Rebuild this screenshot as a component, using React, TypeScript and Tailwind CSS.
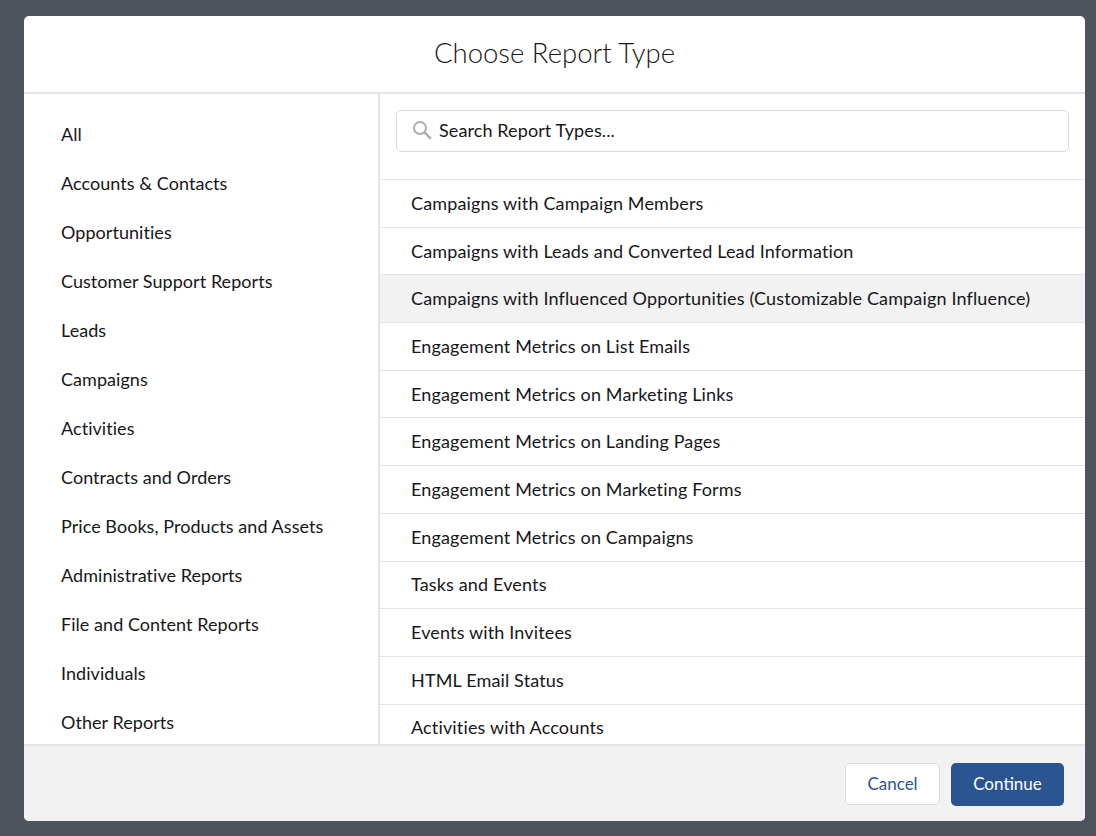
import React from 'react';

const categories = [
  'All',
  'Accounts & Contacts',
  'Opportunities',
  'Customer Support Reports',
  'Leads',
  'Campaigns',
  'Activities',
  'Contracts and Orders',
  'Price Books, Products and Assets',
  'Administrative Reports',
  'File and Content Reports',
  'Individuals',
  'Other Reports',
];

const reportTypes = [
  'Campaigns with Campaign Members',
  'Campaigns with Leads and Converted Lead Information',
  'Campaigns with Influenced Opportunities (Customizable Campaign Influence)',
  'Engagement Metrics on List Emails',
  'Engagement Metrics on Marketing Links',
  'Engagement Metrics on Landing Pages',
  'Engagement Metrics on Marketing Forms',
  'Engagement Metrics on Campaigns',
  'Tasks and Events',
  'Events with Invitees',
  'HTML Email Status',
  'Activities with Accounts',
];

const App = () => {
  return (
    <div className="h-[836px] overflow-hidden bg-[#4f535e] pl-[24px] pr-[11px] pt-[16px] font-['Lato',sans-serif] text-[#16171a]">
      <div className="flex h-[805px] flex-col overflow-hidden rounded-[5px] bg-white">
        {/* Header */}
        <div className="flex h-[78px] shrink-0 items-center justify-center border-b-2 border-[#e4e4e4] pb-[2px]">
          <h2 className="text-[27.5px] font-light text-[#16171a]">Choose Report Type</h2>
        </div>

        {/* Body */}
        <div className="flex min-h-0 flex-1">
          <nav className="w-[354px] shrink-0 overflow-hidden pl-[37px] pt-[15px]">
            {categories.map((name) => (
              <div key={name} className="flex h-[49px] items-center text-[18px] leading-none tracking-[0.05px]">
                {name}
              </div>
            ))}
          </nav>
          <div className="min-w-0 flex-1 overflow-hidden border-l-2 border-[#e4e4e4]">
            <div className="h-[86px] border-b-[1.5px] border-[#e4e4e4] px-[16px] pt-[16px]">
              <div className="flex h-[42px] items-center gap-[8px] rounded-[5px] border border-[#d8d8d8] pb-[2px] pl-[15px]">
                <svg viewBox="0 0 20 20" className="h-[20px] w-[20px] text-[#b0adab]" fill="none" stroke="currentColor">
                  <circle cx="8" cy="8" r="6" strokeWidth="2" />
                  <path d="M12.5 12.5 L18.2 18.2" strokeWidth="2.4" strokeLinecap="round" />
                </svg>
                <span className="-ml-[1px] text-[18px] leading-none tracking-[0.1px]">Search Report Types...</span>
              </div>
            </div>
            {reportTypes.map((name, i) => (
              <div
                key={name}
                className={`flex h-[47.7px] items-center border-b border-[#e4e4e4] pb-[1px] pl-[31px] text-[18px] leading-none tracking-[0.15px] ${
                  i === 2 ? 'bg-[#f2f2f2]' : ''
                }`}
              >
                {name}
              </div>
            ))}
          </div>
        </div>

        {/* Footer */}
        <div className="flex h-[77px] shrink-0 items-start justify-end gap-[11px] border-t-2 border-[#e4e4e4] bg-[#f2f2f2] pr-[21px] pt-[17px]">
          <button className="h-[42px] w-[95px] rounded-[5px] border border-[#dcdcdc] bg-white pb-[1px] text-[17px] text-[#2a5591]">
            Cancel
          </button>
          <button className="h-[43px] w-[113px] rounded-[5px] bg-[#2a5591] pb-[2px] text-[17px] text-white">
            Continue
          </button>
        </div>
      </div>
    </div>
  );
};

export default App;
